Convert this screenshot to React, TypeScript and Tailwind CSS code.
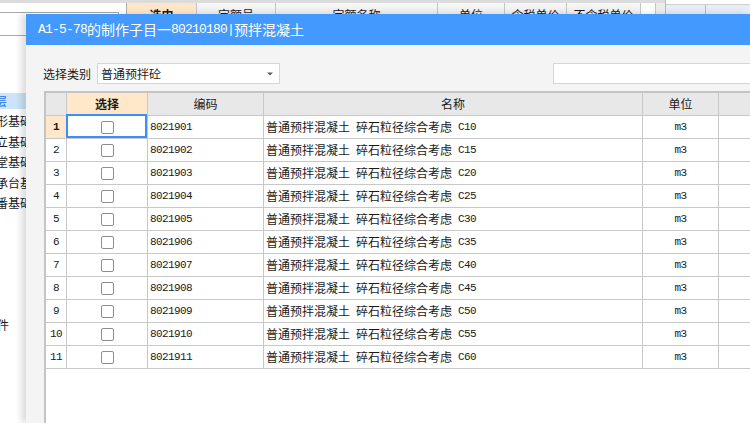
import React from "react";

const grades = ["C10", "C15", "C20", "C25", "C30", "C35", "C40", "C45", "C50", "C55", "C60"];

function Checkbox() {
  return <span className="block w-[13px] h-[13px] rounded-[2px] border border-[#8e8e8e] bg-white" />;
}

export default function App() {
  const cjk = "font-['Noto_Sans_CJK_SC','Noto_Sans',sans-serif]";
  const mono = "font-['Liberation_Mono','Noto_Sans_CJK_SC',monospace]";
  return (
    <div className={`relative w-[750px] h-[423px] overflow-hidden bg-white text-[#1a1a1a] ${cjk}`}>
      {/* background window */}
      <div className="flex h-full">
        <div className="w-[126px] flex flex-col overflow-hidden text-[12px]">
          <div className="h-[3px] bg-[#dcdcdc]" />
          <div className="mt-[9px] h-[24px] w-[119px] border border-l-0 border-[#a9a9a9] bg-white" />
          <div className="mt-[57px] h-[16px] w-[30px] bg-[#cce4fa] flex items-center">
            <span className="ml-[-5px] text-[#1f6fe0] leading-none">层</span>
          </div>
          <div className="mt-[2px] flex flex-col">
            {["形基础", "立基础", "堂基础", "承台基", "番基础"].map((t) => (
              <div key={t} className="h-[20.5px] flex items-center whitespace-nowrap">
                <span className="ml-[-4px] leading-none">{t}</span>
              </div>
            ))}
          </div>
          <div className="mt-[103px] h-[16px] flex items-center">
            <span className="ml-[-3px] leading-none">件</span>
          </div>
        </div>
        <div className="flex-1 flex flex-col">
          <div className="flex h-[30px]">
            <div className="w-[539px] flex flex-col">
              <div className="h-[3px] bg-[#dcdcdc]" />
              <div className="flex h-[24px] border-l border-[#a9a9a9] text-[12px] bg-gradient-to-b from-[#f7f7f7] to-[#e0e0e0]">
                <div className="w-[70px] border-r border-[#c4c4c4] bg-[#ffe6c8] flex items-center justify-center font-bold">选中</div>
                <div className="w-[79px] border-r border-[#c4c4c4] flex items-center justify-center">定额号</div>
                <div className="w-[162px] border-r border-[#c4c4c4] flex items-center justify-center">定额名称</div>
                <div className="w-[67px] border-r border-[#c4c4c4] flex items-center justify-center">单位</div>
                <div className="w-[62px] border-r border-[#c4c4c4] flex items-center justify-center">含税单价</div>
                <div className="w-[74px] border-r border-[#c4c4c4] flex items-center justify-center">不含税单价</div>
                <div className="w-[15px] border-r border-[#c4c4c4] bg-white" />
                <div className="flex-1 bg-[#ececec]" />
              </div>
            </div>
            <div className="flex-1 border-l border-[#b8b8b8] flex flex-col">
              <div className="h-[5px] bg-white border-b border-[#d0d0d0]" />
              <div className="flex-1 flex bg-gradient-to-b from-[#e9eef6] to-[#d8e2f0]">
                <div className="w-[40px] border-r border-[#b8b8b8]" />
              </div>
            </div>
          </div>
        </div>
      </div>

      {/* dialog */}
      <div className="absolute left-[26px] top-[14px] right-0 bottom-0 flex flex-col bg-[#f4f4f4] shadow-[-5px_0_6px_rgba(0,0,0,0.13)]">
        <div className="h-[31px] shrink-0 bg-[#4499ff] flex items-center pl-[12px] text-white text-[14px] whitespace-nowrap">
          <span className={`${mono} text-[13px] tracking-[-0.8px]`}>A1-5-78</span>
          <span>的制作子目一</span>
          <span className={`${mono} text-[13px] tracking-[-0.8px]`}>80210180|</span>
          <span>预拌混凝土</span>
        </div>
        <div className="flex-1 flex flex-col pl-[18px] min-h-0">
          <div className="mt-[18px] flex h-[21px] items-center text-[12px]">
            <span className="w-[54px] ml-[-1px] pr-[1px] whitespace-nowrap">选择类别</span>
            <div className="w-[183px] h-[21px] border border-[#d6d6d6] bg-white flex items-center pl-[3px] pr-[6px]">
              <span className="flex-1">普通预拌砼</span>
              <svg width="6" height="4" viewBox="0 0 6 4"><path d="M0 0.5h6L3 3.5z" fill="#606060" /></svg>
            </div>
            <div className="ml-[273px] flex-1 h-[21px] border border-r-0 border-[#d6d6d6] bg-white" />
          </div>
          <div className="mt-[7px] flex-1 flex flex-col border-t-2 border-l-2 border-[#c4c4c4] bg-white text-[12px]">
            <div className="flex h-[23px] shrink-0 border-b border-[#c8c8c8] bg-[#e8e8e8]">
              <div className="w-[21px] border-r border-[#c8c8c8]" />
              <div className="w-[81px] border-r border-[#c8c8c8] bg-[#ffe7c9] flex items-center justify-center font-bold">选择</div>
              <div className="w-[116px] border-r border-[#c8c8c8] flex items-center justify-center">编码</div>
              <div className="w-[379px] border-r border-[#c8c8c8] flex items-center justify-center">名称</div>
              <div className="w-[76px] border-r border-[#c8c8c8] flex items-center justify-center">单位</div>
              <div className="flex-1" />
            </div>
            {grades.map((g, i) => (
              <div key={g} className="flex h-[23px] shrink-0 border-b border-[#c8c8c8]">
                <div
                  className={`w-[21px] border-r border-[#c8c8c8] flex items-center justify-center ${mono} text-[11px] tracking-[-0.6px] ${
                    i === 0 ? "bg-[#ffe7c9] font-bold" : ""
                  }`}
                >
                  {i + 1}
                </div>
                <div className="relative w-[81px] border-r border-[#c8c8c8] flex items-center justify-center">
                  <Checkbox />
                  {i === 0 && (
                    <span className="absolute left-[-1px] top-[-2px] right-0 bottom-0 border-2 border-[#3d8dff]" />
                  )}
                </div>
                <div className={`w-[116px] border-r border-[#c8c8c8] flex items-center pl-[2px] ${mono} text-[11px] tracking-[-0.6px]`}>
                  {8021901 + i}
                </div>
                <div className="w-[379px] border-r border-[#c8c8c8] flex items-center pl-[2px] whitespace-nowrap">
                  <span>普通预拌混凝土</span>
                  <span className="w-[6px]" />
                  <span>碎石粒径综合考虑</span>
                  <span className={`${mono} text-[11px] tracking-[-0.6px] ml-[6px]`}>{g}</span>
                </div>
                <div className={`w-[76px] border-r border-[#c8c8c8] flex items-center justify-center ${mono} text-[11px] tracking-[-0.6px]`}>
                  m3
                </div>
                <div className="flex-1" />
              </div>
            ))}
            <div className="flex-1" />
          </div>
        </div>
      </div>
    </div>
  );
}
